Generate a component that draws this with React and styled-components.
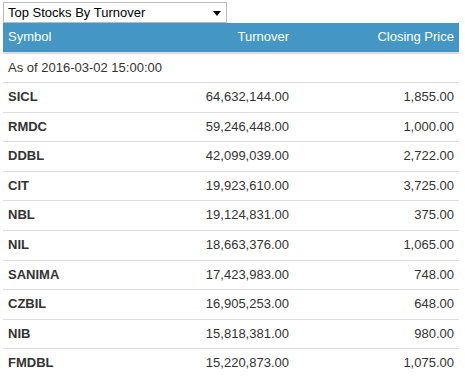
import { createGlobalStyle, styled } from "styled-components";

const stocks = [
  ["SICL", "64,632,144.00", "1,855.00"],
  ["RMDC", "59,246,448.00", "1,000.00"],
  ["DDBL", "42,099,039.00", "2,722.00"],
  ["CIT", "19,923,610.00", "3,725.00"],
  ["NBL", "19,124,831.00", "375.00"],
  ["NIL", "18,663,376.00", "1,065.00"],
  ["SANIMA", "17,423,983.00", "748.00"],
  ["CZBIL", "16,905,253.00", "648.00"],
  ["NIB", "15,818,381.00", "980.00"],
  ["FMDBL", "15,220,873.00", "1,075.00"],
];

export default function App() {
  return (
    <Page>
      <GlobalStyle />
      <Select>
        <span>Top Stocks By Turnover</span>
        <svg width="8" height="5" viewBox="0 0 8 5">
          <path d="M0 0h8L4 5z" fill="#000" />
        </svg>
      </Select>
      <Table>
        <HeadRow>
          <Cell>Symbol</Cell>
          <Cell $right>Turnover</Cell>
          <Cell $right>Closing Price</Cell>
        </HeadRow>
        <Row>
          <NoteCell>As of 2016-03-02 15:00:00</NoteCell>
        </Row>
        {stocks.map(([symbol, turnover, price]) => (
          <Row key={symbol}>
            <Cell $bold>{symbol}</Cell>
            <Cell $right>{turnover}</Cell>
            <Cell $right>{price}</Cell>
          </Row>
        ))}
      </Table>
    </Page>
  );
}

const GlobalStyle = createGlobalStyle`
  body {
    margin: 0;
    background: #fff;
    font-family: "Liberation Sans", Arial, sans-serif;
    font-size: 13px;
    color: #333;
  }
`;

const Page = styled.div`
  padding: 2px 0 0 3px;
  width: 456px;
`;

const Select = styled.div`
  box-sizing: border-box;
  width: 224px;
  height: 21px;
  border: 1px solid #bbb;
  display: flex;
  align-items: center;
  justify-content: space-between;
  padding: 0 5px 0 4px;
  color: #000;
  font-size: 13px;

  > svg {
    margin-top: 1px;
  }
`;

const Table = styled.div`
  display: flex;
  flex-direction: column;
`;

const Row = styled.div`
  display: grid;
  grid-template-columns: 151px 140px 165px;
  border-bottom: 1px solid #ddd;
`;

const HeadRow = styled(Row)`
  background: #4497c5;
  color: #fff;
  border-bottom: 2px solid #ddd;
`;

const Cell = styled.div`
  padding: 5px;
  line-height: 18.57px;
  text-align: ${(p) => (p.$right ? "right" : "left")};
  font-weight: ${(p) => (p.$bold ? "bold" : "normal")};
  white-space: nowrap;
`;

const NoteCell = styled(Cell)`
  grid-column: 1 / -1;
`;
